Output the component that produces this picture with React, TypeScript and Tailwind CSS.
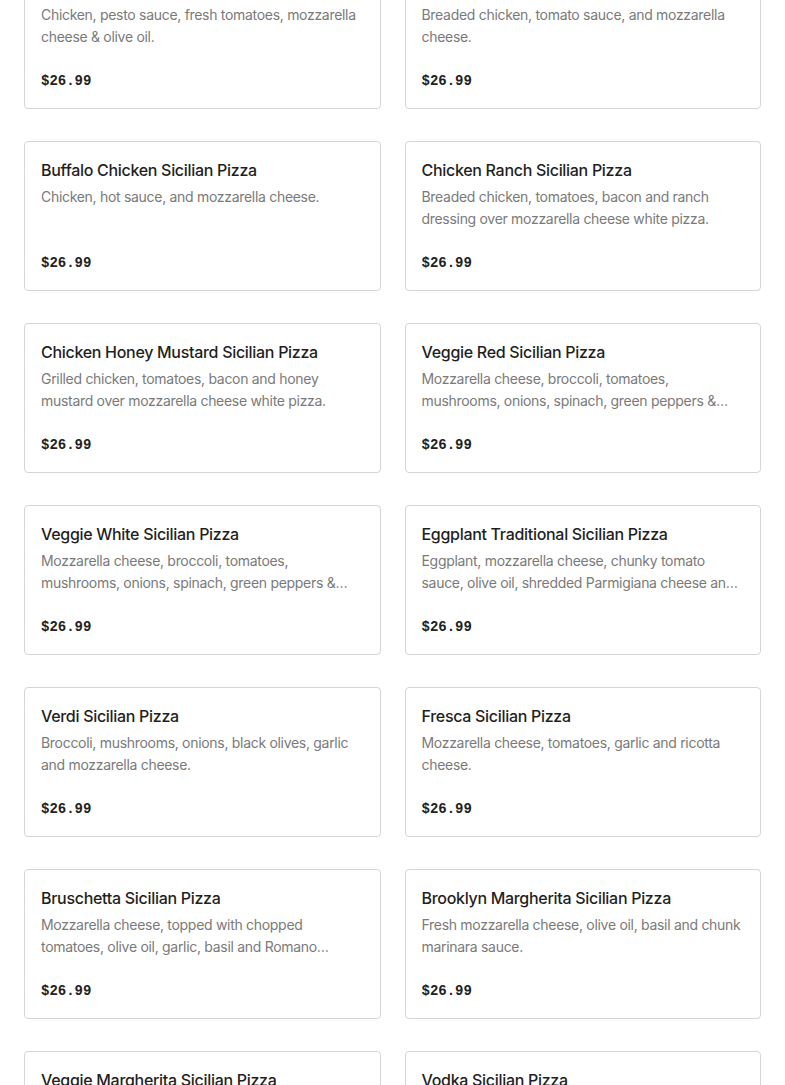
type Item = { name: string; desc: string; price: string };

const items: Item[] = [
  { name: 'Chicken Pesto Sicilian Pizza', desc: 'Chicken, pesto sauce, fresh tomatoes, mozzarella cheese & olive oil.', price: '$26.99' },
  { name: 'Chicken Parm Sicilian Pizza', desc: 'Breaded chicken, tomato sauce, and mozzarella cheese.', price: '$26.99' },
  { name: 'Buffalo Chicken Sicilian Pizza', desc: 'Chicken, hot sauce, and mozzarella cheese.', price: '$26.99' },
  { name: 'Chicken Ranch Sicilian Pizza', desc: 'Breaded chicken, tomatoes, bacon and ranch dressing over mozzarella cheese white pizza.', price: '$26.99' },
  { name: 'Chicken Honey Mustard Sicilian Pizza', desc: 'Grilled chicken, tomatoes, bacon and honey mustard over mozzarella cheese white pizza.', price: '$26.99' },
  { name: 'Veggie Red Sicilian Pizza', desc: 'Mozzarella cheese, broccoli, tomatoes, mushrooms, onions, spinach, green peppers & black olives.', price: '$26.99' },
  { name: 'Veggie White Sicilian Pizza', desc: 'Mozzarella cheese, broccoli, tomatoes, mushrooms, onions, spinach, green peppers & black olives.', price: '$26.99' },
  { name: 'Eggplant Traditional Sicilian Pizza', desc: 'Eggplant, mozzarella cheese, chunky tomato sauce, olive oil, shredded Parmigiana cheese and basil.', price: '$26.99' },
  { name: 'Verdi Sicilian Pizza', desc: 'Broccoli, mushrooms, onions, black olives, garlic and mozzarella cheese.', price: '$26.99' },
  { name: 'Fresca Sicilian Pizza', desc: 'Mozzarella cheese, tomatoes, garlic and ricotta cheese.', price: '$26.99' },
  { name: 'Bruschetta Sicilian Pizza', desc: 'Mozzarella cheese, topped with chopped tomatoes, olive oil, garlic, basil and Romano cheese.', price: '$26.99' },
  { name: 'Brooklyn Margherita Sicilian Pizza', desc: 'Fresh mozzarella cheese, olive oil, basil and chunk marinara sauce.', price: '$26.99' },
  { name: 'Veggie Margherita Sicilian Pizza', desc: 'Fresh mozzarella cheese, tomatoes, spinach, basil and olive oil.', price: '$26.99' },
  { name: 'Vodka Sicilian Pizza', desc: 'Vodka sauce, fresh mozzarella cheese and basil.', price: '$26.99' },
];

const MenuCard = ({ item }: { item: Item }) => {
  return (
    <div className="flex h-[150px] flex-col rounded-[4px] border border-[#d6d6d6] bg-white px-4 pt-4">
      <h3 className="text-[16px] font-medium leading-6 tracking-[-0.3px] text-[#1f1f1f]">{item.name}</h3>
      <p className="mt-1 line-clamp-2 h-[44px] text-[14px] leading-[22px] tracking-[-0.3px] text-[#7a7a7a]">{item.desc}</p>
      <span className="mt-[23px] font-['Liberation_Mono',monospace] text-[14px] font-bold leading-5 text-[#222]">
        {item.price}
      </span>
    </div>
  );
};

const App = () => {
  return (
    <main className="h-[1085px] overflow-hidden bg-white font-['Inter',sans-serif]">
      <section className="-mt-[41px] grid grid-cols-2 gap-x-6 gap-y-8 px-6">
        {items.map((item) => (
          <MenuCard key={item.name} item={item} />
        ))}
      </section>
    </main>
  );
};

export default App;
